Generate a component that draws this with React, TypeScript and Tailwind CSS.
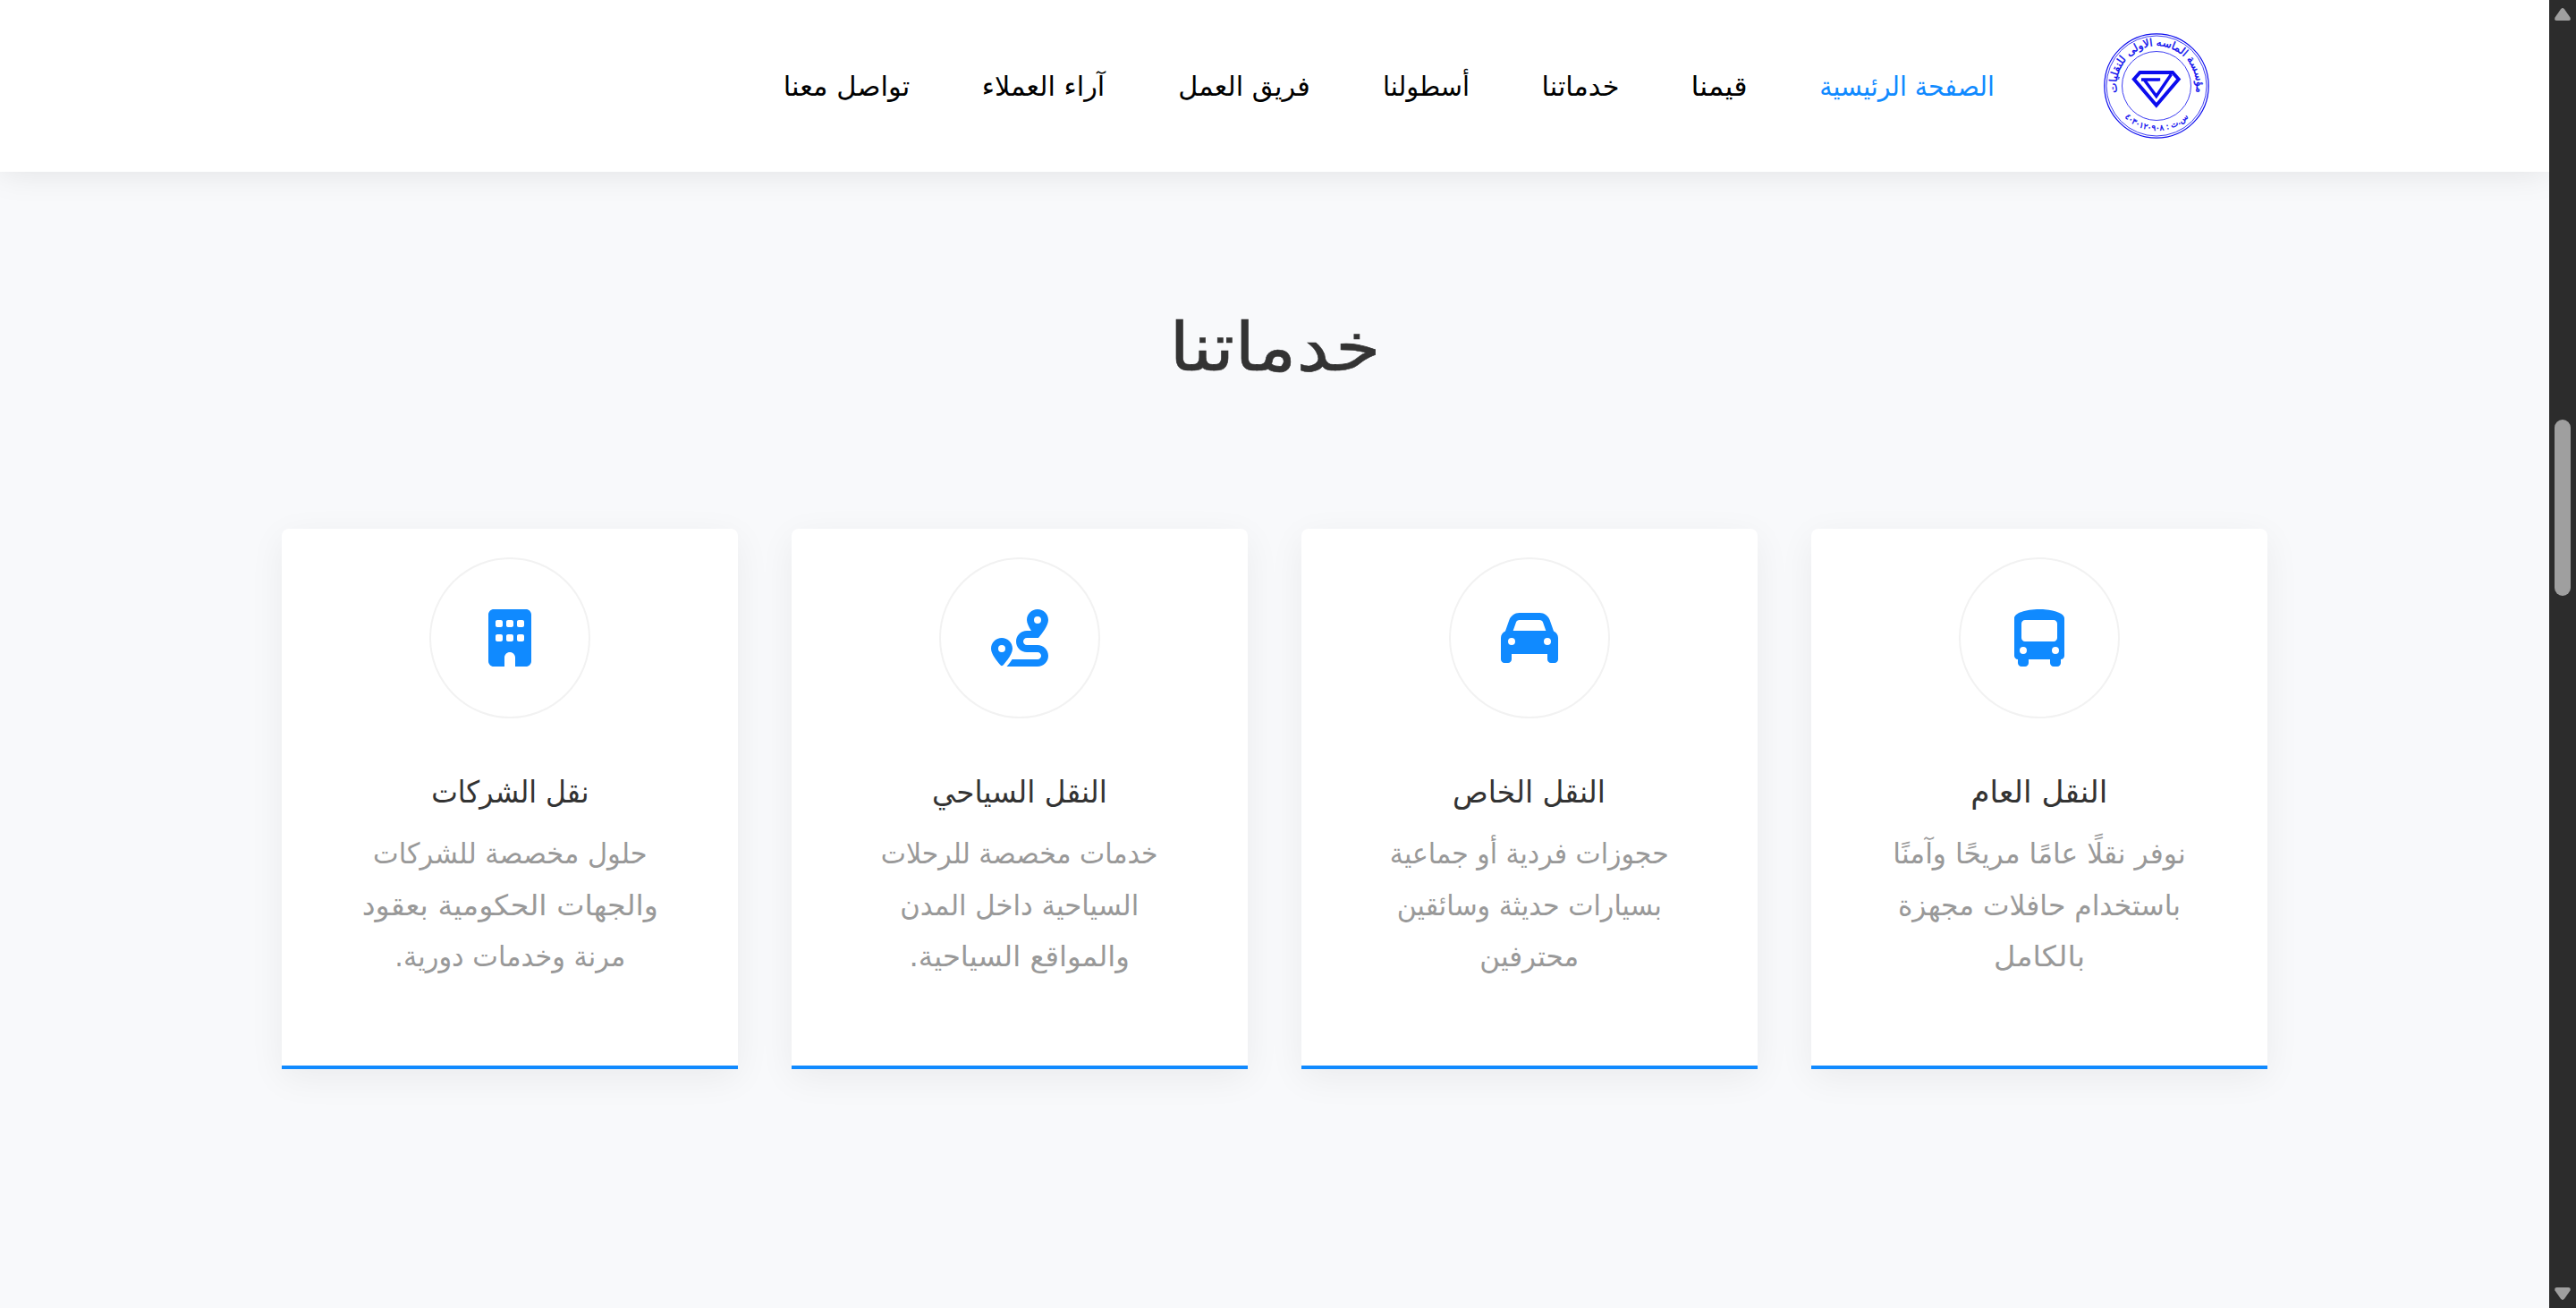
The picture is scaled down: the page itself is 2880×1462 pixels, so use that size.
import { FaBuilding, FaBusSimple, FaCar, FaRoute } from 'react-icons/fa6';
import type { IconType } from 'react-icons';

type Line = { text: string; scale: string };
type Service = { title: Line; lines: Line[]; Icon: IconType };

const navItems = [
  { label: 'الصفحة الرئيسية', width: 'w-[194px]', scale: 'scale-x-[0.945]' },
  { label: 'قيمنا', width: 'w-[60px]', scale: 'scale-x-[1.07]' },
  { label: 'خدماتنا', width: 'w-[84px]', scale: 'scale-x-[1.01]' },
  { label: 'أسطولنا', width: 'w-[95px]', scale: 'scale-x-[0.96]' },
  { label: 'فريق العمل', width: 'w-[146px]', scale: 'scale-x-[1.01]' },
  { label: 'آراء العملاء', width: 'w-[137px]', scale: 'scale-x-[1.01]' },
  { label: 'تواصل معنا', width: 'w-[137px]', scale: 'scale-x-[1.02]' },
];

const services: Service[] = [
  {
    title: { text: 'النقل العام', scale: 'scale-x-[1.01]' },
    lines: [
      { text: 'نوفر نقلًا عامًا مريحًا وآمنًا', scale: 'scale-x-[0.98]' },
      { text: 'باستخدام حافلات مجهزة', scale: 'scale-x-[0.98]' },
      { text: 'بالكامل', scale: 'scale-x-[1.05]' },
    ],
    Icon: FaBusSimple,
  },
  {
    title: { text: 'النقل الخاص', scale: 'scale-x-[0.965]' },
    lines: [
      { text: 'حجوزات فردية أو جماعية', scale: 'scale-x-[0.935]' },
      { text: 'بسيارات حديثة وسائقين', scale: 'scale-x-[0.94]' },
      { text: 'محترفين', scale: 'scale-x-[0.97]' },
    ],
    Icon: FaCar,
  },
  {
    title: { text: 'النقل السياحي', scale: 'scale-x-[0.96]' },
    lines: [
      { text: 'خدمات مخصصة للرحلات', scale: 'scale-x-[0.935]' },
      { text: 'السياحية داخل المدن', scale: 'scale-x-[0.96]' },
      { text: 'والمواقع السياحية.', scale: 'scale-x-[1.01]' },
    ],
    Icon: FaRoute,
  },
  {
    title: { text: 'نقل الشركات', scale: 'scale-x-[0.925]' },
    lines: [
      { text: 'حلول مخصصة للشركات', scale: 'scale-x-[0.95]' },
      { text: 'والجهات الحكومية بعقود', scale: 'scale-x-[1.04]' },
      { text: 'مرنة وخدمات دورية.', scale: 'scale-x-[0.95]' },
    ],
    Icon: FaBuilding,
  },
];

function Logo() {
  return (
    <svg viewBox="0 0 118 118" className="size-[118px] shrink-0" fill="none" stroke="#0c0cee">
      <circle cx="59" cy="59" r="58.2" strokeWidth="1.2" />
      <circle cx="59" cy="59" r="56" strokeWidth="0.8" />
      <circle cx="59" cy="59" r="38.5" strokeWidth="0.8" />
      <path id="upper" d="M17 74A44.6 44.6 0 1 1 101 74" stroke="none" />
      <path id="lower" d="M10 69A50 50 0 0 0 108 69" stroke="none" />
      <g fill="#0c0cee" stroke="#0c0cee" strokeWidth=".35" fontFamily="DejaVu Sans, sans-serif" textAnchor="middle">
        <text fontSize="12"><textPath href="#upper" startOffset="50%">مؤسسة الماسه الاولى للنقليات</textPath></text>
        <text fontSize="9" letterSpacing="3.2"><textPath href="#lower" startOffset="50%">س.ت : ٤٠٣٠١٢٠٩٠٨</textPath></text>
      </g>
      <path d="M40.5 44H77L83.7 51.5L58.8 80.8L33.8 51.5Z" strokeWidth="3.9" />
      <path d="M42 52H61.5V53.6M75.5 46L58.8 70.5L45.5 52.5" strokeWidth="3.4" />
    </svg>
  );
}

function ServiceCard({ title, lines, Icon }: Service) {
  return (
    <article className="flex h-[604px] w-[510px] flex-col items-center rounded-t-[8px] border-b-4 border-[#108aff] bg-white pt-8 text-center shadow-[0_10px_40px_rgba(0,0,0,0.06)]">
      <div className="flex size-[180px] items-center justify-center rounded-full border-2 border-[#f2f2f2]">
        <Icon className="h-16 w-auto text-[#108aff]" size={64} />
      </div>
      <h3 className={`mt-[52px] whitespace-nowrap text-[34px] leading-[60px] text-[#333] ${title.scale}`}>{title.text}</h3>
      <p className="mt-[11px] text-[32px] leading-[57.6px] text-[#999]">
        {lines.map((line) => (
          <span key={line.text} className={`block whitespace-nowrap ${line.scale}`}>{line.text}</span>
        ))}
      </p>
    </article>
  );
}

function Scrollbar() {
  return (
    <aside className="flex h-full w-[30px] shrink-0 flex-col items-center bg-[#2c2c2c] text-[#9f9f9f]">
      <svg viewBox="0 0 18 14" className="mt-[9px] h-[14px] w-[18px]" fill="currentColor"><path d="M7 1.2Q9-1 11 1.2L17.5 10.6Q18.6 14 15.5 14H2.5Q-.6 14 .5 10.6Z" /></svg>
      <div className="mt-[446px] h-[197px] w-[18px] rounded-full bg-[#9f9f9f]" />
      <svg viewBox="0 0 18 14" className="mt-auto mb-[9px] h-[14px] w-[18px] rotate-180" fill="currentColor"><path d="M7 1.2Q9-1 11 1.2L17.5 10.6Q18.6 14 15.5 14H2.5Q-.6 14 .5 10.6Z" /></svg>
    </aside>
  );
}

export default function App() {
  return (
    <div className="flex h-[1462px] w-[2880px] overflow-hidden bg-[#f8f9fb] font-['DejaVu_Sans',sans-serif]">
      <div dir="rtl" className="flex min-w-0 flex-1 flex-col">
        <header className="flex h-[192px] items-center bg-white pr-[380px] shadow-[0_0_36px_rgba(0,0,0,0.1)]">
          <Logo />
          <nav className="mr-[123px] flex gap-[83px] pt-px text-[30px] leading-[60px]">
            {navItems.map((item, i) => (
              <a key={item.label} className={`${item.width} ${item.scale} flex justify-center whitespace-nowrap ${i === 0 ? 'text-[#108aff]' : 'text-black'}`}>{item.label}</a>
            ))}
          </nav>
        </header>
        <main className="flex flex-col items-center">
          <h2 className="mt-[141px] mr-[-2px] scale-x-[1.1] text-[75px] leading-[110px] text-[#333] [-webkit-text-stroke:0.6px_#333]">خدماتنا</h2>
          <section className="mt-[148px] flex gap-[60px]">
            {services.map((s) => <ServiceCard key={s.title.text} {...s} />)}
          </section>
        </main>
      </div>
      <Scrollbar />
    </div>
  );
}
